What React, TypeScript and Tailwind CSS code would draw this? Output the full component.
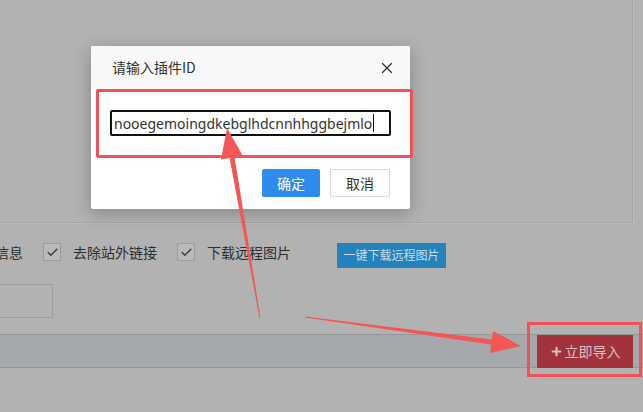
import { X, Check, Plus } from "lucide-react";

const cjk = "font-['Noto_Sans_CJK_SC','Noto_Sans',sans-serif]";

function Tick() {
  return (
    <span className="flex h-[18px] w-[18px] items-center justify-center border border-[#9c9c9c] bg-[#bababa]">
      <Check size={13} strokeWidth={2.5} className="text-[#3a3a3a]" />
    </span>
  );
}

// red markup drawn over the page
function Arrows() {
  return (
    <svg className="pointer-events-none absolute left-0 top-0" width="643" height="412">
      <polygon
        fill="#f35656"
        points="227,128 243,156 234.6,157.2 260.5,318 259.5,318 229.6,158 221,159.5"
      />
      <polygon
        fill="#f35656"
        points="521,346 490,353 491,344.5 305,317.6 305,316.4 491.6,339.5 493,331"
      />
    </svg>
  );
}

export default function App() {
  return (
    <div className={`relative h-[412px] w-[643px] overflow-hidden bg-[#b2b2b2] ${cjk}`}>
      {/* editor panel behind the dialog */}
      <div className="mr-[10px] h-[223px] border-b border-r border-[#a4a4a4] shadow-[1px_1px_0_#bdbdbd]" />

      <div className="mt-[20px] flex h-[18px] items-center text-[14px] text-[#2e2e2e]">
        <span className="ml-[-5px]">信息</span>
        <span className="ml-[20px]"><Tick /></span>
        <span className="ml-[12px]">去除站外链接</span>
        <span className="ml-[20px]"><Tick /></span>
        <span className="ml-[12px]">下载远程图片</span>
        <span className="ml-[46px] mt-[6px] flex h-[25px] w-[109px] items-center justify-center bg-[#2283bd] text-[12px] text-[#c6dcea]">
          一键下载远程图片
        </span>
      </div>

      <div className="mt-[23px] h-[34px] w-[53px] border border-l-0 border-[#9e9e9e]" />

      <div className="mt-[16px] flex h-[34px] items-center justify-end border-y border-[#969696] bg-[#a6a9ab] pr-[10px]">
        <span className="flex h-[33px] w-[96px] items-center justify-center gap-[2px] bg-[#a2323b] text-[14px] text-[#dcc0c3]">
          <Plus size={13} strokeWidth={4} />
          立即导入
        </span>
      </div>

      {/* dialog */}
      <div className="absolute left-[91px] top-[46px] h-[163px] w-[319px] rounded-[2px] bg-white shadow-[0_4px_18px_rgba(0,0,0,0.25)]">
        <div className="flex h-[43px] items-center justify-between rounded-t-[2px] bg-[#f8f8f8] pl-[21px] pr-[14px]">
          <span className="text-[14px] text-[#333]">请输入插件ID</span>
          <X size={18} strokeWidth={1.6} className="text-[#333]" />
        </div>
        <div className="flex h-[68px] items-center pl-[19px]">
          <div className="flex h-[26px] w-[281px] items-center rounded-[2px] border-2 border-[#111] pl-[2px] font-['Noto_Sans',sans-serif] text-[14px] text-[#333]">
            nooegemoingdkebglhdcnnhhggbejmlo
            <span className="ml-px h-[18px] w-px bg-[#111]" />
          </div>
        </div>
        <div className="flex justify-end gap-[10px] pr-[20px] pt-[12px]">
          <span className="flex h-[28px] w-[58px] items-center justify-center rounded-[2px] bg-[#2d8cf0] text-[14px] text-white">
            确定
          </span>
          <span className="flex h-[28px] w-[60px] items-center justify-center border border-[#dcdcdc] bg-white text-[14px] text-[#333]">
            取消
          </span>
        </div>
      </div>

      {/* highlight frames */}
      <div className="absolute left-[96px] top-[89px] h-[69px] w-[317px] rounded-[2px] border-[3px] border-[#f0525a]" />
      <div className="absolute left-[527px] top-[322px] h-[55px] w-[115px] border-[3px] border-[#f0525a]" />

      <Arrows />
    </div>
  );
}
